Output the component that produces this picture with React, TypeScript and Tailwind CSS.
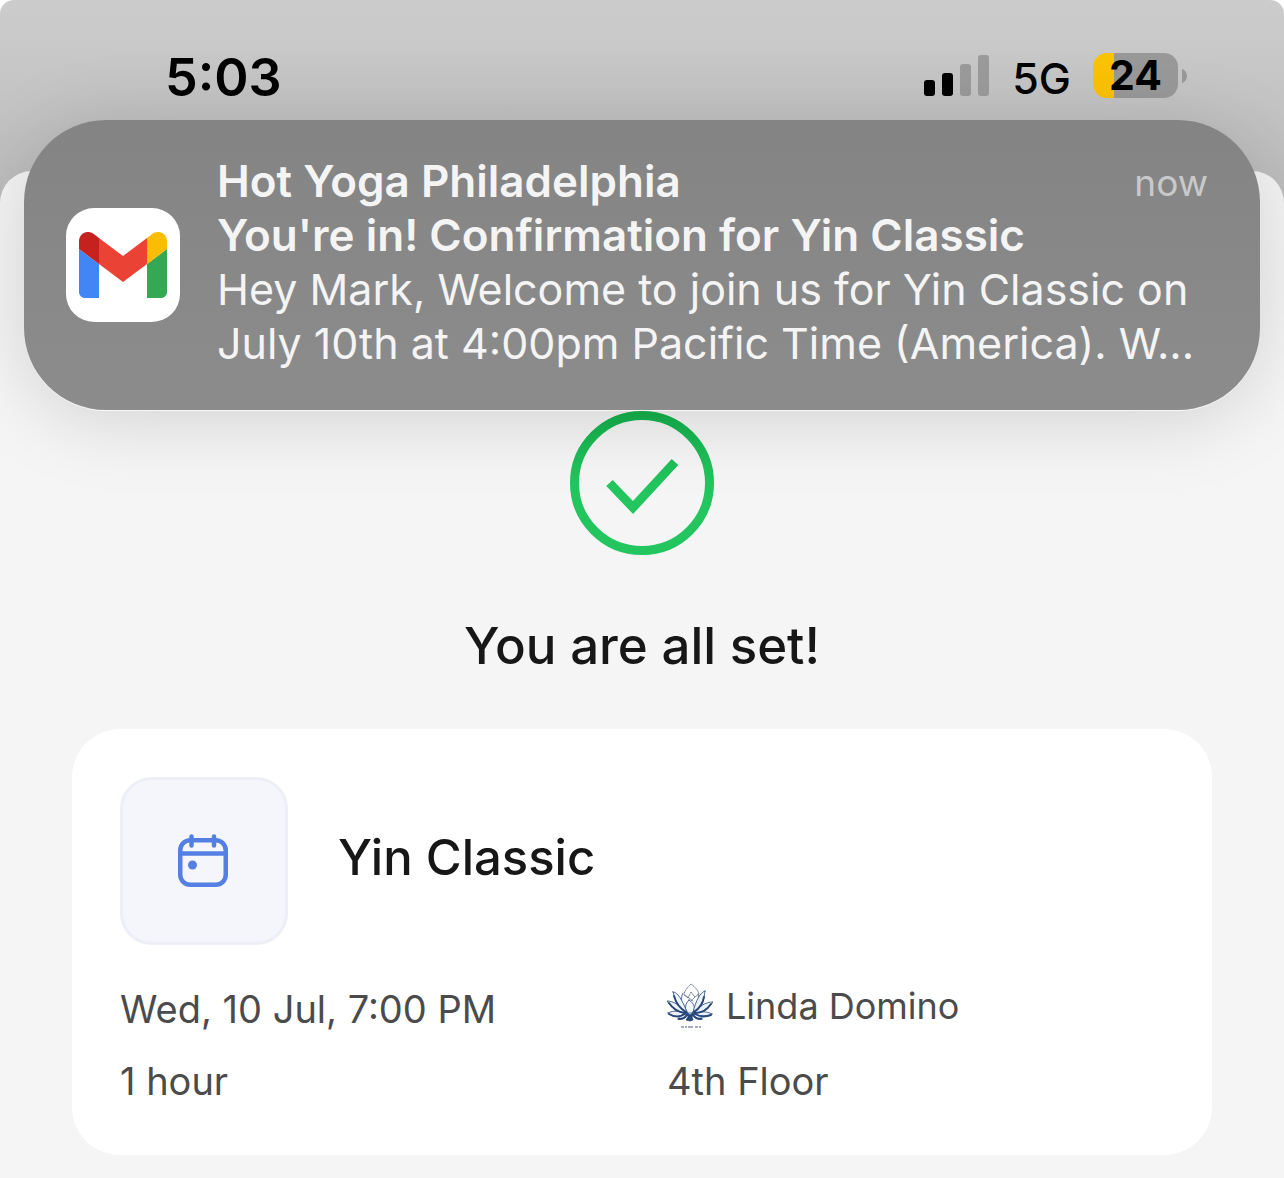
function SignalBars() {
  return (
    <svg width="66" height="44" viewBox="0 0 66 44" role="img" aria-label="Signal: 2 of 4 bars">
      <rect x="0" y="27" width="11" height="16" rx="3" fill="#000" />
      <rect x="18" y="20" width="11" height="23" rx="3" fill="#000" />
      <rect x="36" y="11" width="11" height="32" rx="3" fill="#9b9b9b" />
      <rect x="54" y="2" width="11" height="41" rx="3" fill="#9b9b9b" />
    </svg>
  );
}

function Battery() {
  return (
    <div className="flex items-center gap-1">
      <div className="flex h-[45px] w-[85px] items-center justify-center rounded-[14px] bg-linear-to-r from-[#fcc204] from-25% to-[#999999] to-25% text-[41px] leading-none font-bold">
        24
      </div>
      <svg width="5" height="14" viewBox="0 0 5 14" aria-hidden="true">
        <path d="M0 0C3 1 5 4 5 7S3 13 0 14Z" fill="#999" />
      </svg>
    </div>
  );
}

function StatusBar() {
  return (
    <header className="flex items-start justify-between pt-[53px] pr-[97px] pb-[68px] pl-[165px] text-black">
      <time className="text-[52px] leading-[50px] font-semibold">5:03</time>
      <div className="flex items-start">
        <SignalBars />
        <span className="mx-[22px] pt-1 text-[43px] leading-[42px] font-medium">5G</span>
        <Battery />
      </div>
    </header>
  );
}

function GmailIcon() {
  return (
    <span className="flex size-[114px] shrink-0 items-center justify-center rounded-[28px] bg-white">
      <svg width="88" height="66" viewBox="52 42 88 66" role="img" aria-label="Gmail">
        <path fill="#4285f4" d="M58 108h14V74L52 59v43c0 3.320 2.690 6 6 6" />
        <path fill="#34a853" d="M120 108h14c3.320 0 6-2.690 6-6V59l-20 15" />
        <path fill="#fbbc04" d="M120 48v26l20-15v-8c0-7.420-8.470-11.650-14.400-7.200" />
        <path fill="#ea4335" d="M72 74V48l24 18 24-18v26L96 92" />
        <path fill="#c5221f" d="M52 51v8l20 15V48l-5.600-4.200c-5.940-4.450-14.400-.220-14.400 7.200" />
      </svg>
    </span>
  );
}

function Notification() {
  return (
    <aside className="absolute inset-x-6 top-[120px] flex items-center gap-[37px] rounded-[82px] bg-linear-to-b from-[#848484] to-[#8c8c8c] py-[34px] pr-[52px] pl-[42px] shadow-[0_1px_0_0_rgba(255,255,255,0.7),0_8px_80px_rgba(0,0,0,0.15)]">
      <GmailIcon />
      <div className="min-w-0 flex-1 pb-1.5 text-[43px] leading-[54px] text-[#f4f4f4]">
        <div className="flex items-center justify-between">
          <h2 className="text-[44px] leading-[54px] font-semibold">Hot Yoga Philadelphia</h2>
          <span className="pt-0.5 text-[37px] leading-none text-[#c9c9c9]">now</span>
        </div>
        <p className="text-[44px] leading-[54px] font-semibold">You're in! Confirmation for Yin Classic</p>
        <p className="whitespace-nowrap">Hey Mark, Welcome to join us for Yin Classic on</p>
        <p className="whitespace-nowrap">July 10th at 4:00pm Pacific Time (America). W...</p>
      </div>
    </aside>
  );
}

function SuccessMark() {
  return (
    <svg width="144" height="144" viewBox="0 0 144 144" fill="none" stroke="url(#mark)" strokeWidth="9" aria-hidden="true">
      <defs>
        <linearGradient id="mark" gradientUnits="userSpaceOnUse" x1="0" y1="0" x2="0" y2="144">
          <stop offset="0" stopColor="#14b04c" />
          <stop offset=".5" stopColor="#22c55e" />
        </linearGradient>
      </defs>
      <circle cx="72" cy="72" r="67.500" />
      <path d="M39.500 72 63 96.500 105 51" />
    </svg>
  );
}

function CalendarIcon() {
  return (
    <svg width="50" height="54" viewBox="0 0 50 54" fill="none" stroke="#5480e4" strokeWidth="4.500" strokeLinecap="round" aria-hidden="true">
      <rect x="2.250" y="6.250" width="45.500" height="44.500" rx="10" />
      <path d="M2.500 19.500h45M13.500 2.500v9M36 2.500v9" />
      <circle cx="14.500" cy="31" r="4.500" fill="#5480e4" stroke="none" />
    </svg>
  );
}

function LotusLogo() {
  return (
    <svg width="46" height="46" viewBox="0 0 46 46" fill="none" stroke="#27477c" strokeWidth=".8" strokeLinejoin="round" strokeLinecap="round" aria-hidden="true">
      <path stroke="#4f5b72" strokeWidth=".7" strokeDasharray="3 1" d="M24 1c-3 3-7 7-7 11l4 3 3-6 4 5 4-3c-1-4-5-8-8-10ZM18 12l8 6M28 14l-6 6" />
      <path fill="#f4f7fc" d="M16 10c-3 6-3 13 4 20M31 11c2 7 1 13-5 19M22 17c-4 4-5 9-1 13h4c4-4 3-9-3-13Z" />
      <path fill="#edf2fa" d="M6 9c5 0 9 8 14 20C11 26 9 19 6 9ZM38 8c-5 1-9 10-12 21 9-4 11-12 12-21Z" />
      <path fill="#edf2fa" d="M0 18c7 0 12 4 19 12C10 31 6 26 0 18ZM46 19c-8 0-13 4-19 11 9 1 14-4 19-11Z" />
      <path fill="#edf2fa" d="M1 30c6-3 11-2 18 1-5 4-12 4-18-1ZM45 31c-6-3-11-3-18 0 5 4 12 4 18 0Z" />
      <path fill="#edf2fa" d="M11 36c2-4 5-5 9-5-1 4-4 6-9 5ZM35 36c-2-4-5-5-9-5 1 4 4 6 9 5Z" />
      <path strokeWidth="1.900" d="M7 13c2 7 5 12 12 16M37 14c-1 6-4 11-10 15M2 20c4 6 9 9 16 10M44 21c-4 6-9 9-16 9M2 31c5 3 11 3 16 0M44 32c-6 2-11 2-16-1M12 36c3 0 6-1 8-4M34 36c-3 0-6-1-8-4" />
      <path fill="#27477c" d="M18 28l5 4 5-4-3 6 1 3-3 1-4-1 2-3Z" />
      <path stroke="#4f5b72" strokeWidth="1.200" strokeLinecap="butt" strokeDasharray="3 1 2 1 5 2" d="M14 44h20" />
    </svg>
  );
}

function BookingCard() {
  return (
    <section className="mt-[53px] rounded-[48px] bg-white px-12 pt-12 pb-[50px]">
      <div className="flex items-center gap-[50px]">
        <span className="flex size-[168px] items-center justify-center rounded-[32px] border-[3px] border-[#eeeff6] bg-[#f5f6fb] pr-0.5">
          <CalendarIcon />
        </span>
        <h2 className="pb-1.5 text-[49px] leading-[60px] font-medium text-[#171717]">Yin Classic</h2>
      </div>
      <div className="mt-10 grid grid-cols-2 gap-x-[50px] gap-y-6 text-[38px] leading-[48px] text-[#4b4b4b]">
        <p>Wed, 10 Jul, 7:00 PM</p>
        <div className="-mt-1.5 flex items-center gap-[13px]">
          <LotusLogo />
          <span className="text-[36px] leading-[44px]">Linda Domino</span>
        </div>
        <p>1 hour</p>
        <p>4th Floor</p>
      </div>
    </section>
  );
}

export default function App() {
  return (
    <div className="bg-white font-['Inter',sans-serif]">
      <div className="relative min-h-screen overflow-hidden rounded-t-[14px] bg-linear-to-b from-[#cccccc] to-[#bcbcbc] to-[200px]">
        <StatusBar />
        <main className="min-h-[1007px] rounded-t-[32px] bg-[#f5f5f6] px-[72px] pt-60 pb-6">
          <div className="flex flex-col items-center">
            <SuccessMark />
            <h1 className="mt-[61px] text-[51px] leading-[60px] font-medium text-[#171717]">You are all set!</h1>
          </div>
          <BookingCard />
        </main>
        <Notification />
      </div>
    </div>
  );
}
